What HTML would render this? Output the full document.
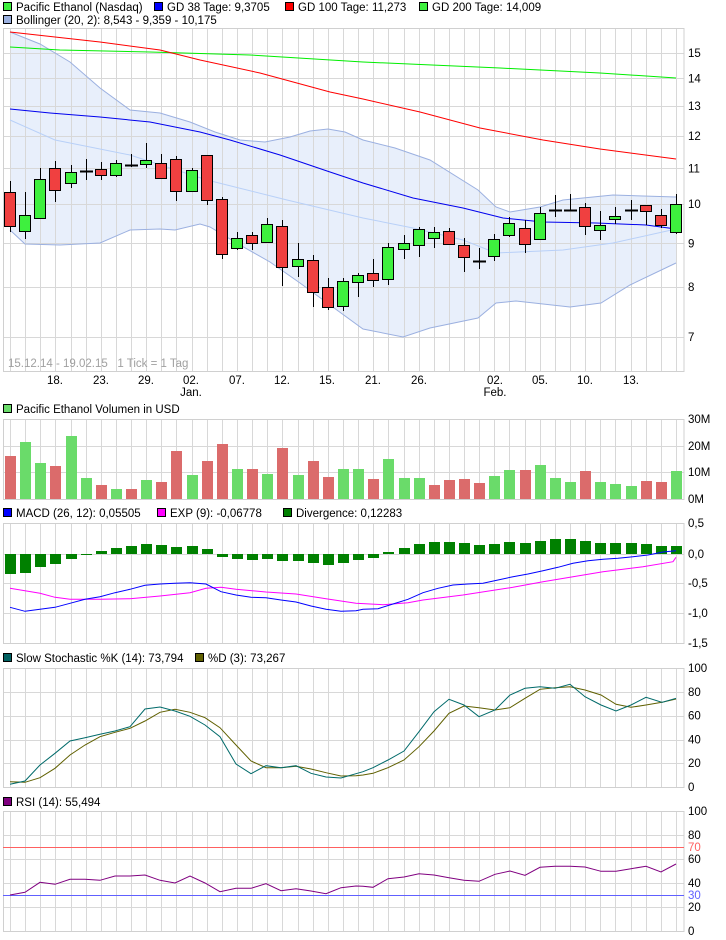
<!DOCTYPE html>
<html><head><meta charset="utf-8"><style>
body{margin:0;background:#fff;width:726px;height:940px;overflow:hidden}
svg{display:block}
text{font-family:"Liberation Sans",sans-serif;font-size:11.5px;fill:#000}
</style></head><body>
<svg id="s" width="726" height="940" xmlns="http://www.w3.org/2000/svg"></svg>
<script>
var s=document.getElementById('s'),h='';
var X=[];for(var i=0;i<45;i++)X.push(10+i*15.136);
function L(x1,y1,x2,y2,c,w){h+='<line x1="'+x1+'" y1="'+y1+'" x2="'+x2+'" y2="'+y2+'" stroke="'+c+'" stroke-width="'+(w||1)+'" shape-rendering="crispEdges"/>';}
function R(x,y,w,hh,f,st){h+='<rect x="'+x+'" y="'+y+'" width="'+w+'" height="'+hh+'" fill="'+f+'"'+(st?' stroke="'+st+'"':'')+' shape-rendering="crispEdges"/>';}
function T(x,y,t,c,a){h+='<text x="'+x+'" y="'+y+'"'+(c?' style="fill:'+c+'"':'')+(a?' text-anchor="'+a+'"':'')+'>'+t+'</text>';}
function P(pts,c,w,fill){var d=pts.map(function(p){return p[0]+','+p[1]}).join(' ');h+='<polyline points="'+d+'" fill="'+(fill||'none')+'" stroke="'+c+'" stroke-width="'+(w||1)+'"/>';}
function panel(top,bot,hl){for(var i=0;i<X.length;i++)L(Math.round(X[i])+.5,top,Math.round(X[i])+.5,bot,'#d8d8d8');hl.forEach(function(y){L(3,y+.5,684,y+.5,'#d8d8d8')});h+='<rect x="3.5" y="'+(top+.5)+'" width="680.5" height="'+(bot-top)+'" fill="none" stroke="#d0d0d0"/>';}
function leg(x,y,c,t){R(x+.5,y-8.5,8,8,c,'#000');T(x+13,y,t);}
leg(3,11,'#3ef03e','Pacific Ethanol (Nasdaq)');leg(154,11,'#0000ff','GD 38 Tage: 9,3705');leg(285,11,'#ff0000','GD 100 Tage: 11,273');leg(419,11,'#3ef03e','GD 200 Tage: 14,009');
leg(3,24,'#9bb0e0','Bollinger (20, 2): 8,543 - 9,359 - 10,175');
function py(p){return 204-373*Math.log(p/10);}
var up=[[10,32],[40,44],[70,62],[100,88],[130,110],[160,113],[190,122],[215,132],[240,140],[265,142],[290,137],[310,131],[328,129],[345,132],[363,140],[395,148],[430,160],[478,190],[496,207],[510,212],[540,207],[563,200],[613,195],[676,197]];
var lo=[[10,230],[25,244],[60,245],[100,243],[130,230],[160,229],[175,230],[200,224],[210,227],[240,245],[270,262],[300,283],[330,305],[363,329],[403,337],[430,328],[478,318],[496,303],[516,301],[570,307],[601,303],[630,285],[676,263]];
h+='<polygon points="'+up.concat(lo.slice().reverse()).map(function(p){return p.join(',')}).join(' ')+'" fill="#e8effb"/>';
panel(28,371,[py(15),py(14),py(13),py(12),py(11),py(10),py(9),py(8),py(7)].map(Math.round));
P(up,'#9bb0e0');P(lo,'#9bb0e0');
P([[10,120],[55,140],[130,155],[207,180],[287,200],[363,218],[413,228],[463,240],[496,253],[563,250],[613,243],[676,229]],'#b8d0f8');
P([[10,47],[60,50],[150,52],[250,55],[363,62],[500,68],[600,73],[676,78]],'#00ee00');
P([[10,32],[100,42],[160,50],[200,60],[260,73],[330,92],[363,99],[420,112],[480,128],[543,140],[600,149],[676,159]],'#ff0000');
P([[10,109],[50,113],[100,117],[150,122],[200,132],[230,140],[280,155],[330,172],[363,183],[413,198],[463,208],[503,218],[543,222],[596,223],[646,225],[676,229]],'#0000ee');
var C=[['r',157,259,122,275],['g',226,274,155,297],['g',118,235,84,235],['r',85,151,63,185],['g',97,130,75,143],['d',92,92,57,119],['r',88,106,66,119],['g',70,106,60,110],['d',74,74,42,80],['g',61,73,10,85],['r',70,115,42,115],['r',58,154,48,182],['g',91,152,85,155],['r',46,181,46,194],['r',178,343,172,358],['g',295,325,276,330],['r',286,310,276,331],['g',253,307,234,310],['r',259,381,240,437],['g',357,379,310,410],['r',360,457,345,502],['r',441,502,414,510],['g',424,499,414,512],['g',405,427,399,472],
['r',400,421,357,440],['g',322,418,310,434],['g',310,328,286,356],['g',268,316,262,352],['g',277,295,262,323],['r',273,313,265,316],['r',316,352,294,397],['d',362,362,325,388],['g',298,349,283,364],['g',250,286,232,290],['r',265,313,240,338],['g',220,298,200,298],['d',211,211,165,232],['d',209,209,162,214],['r',202,259,190,286],['g',256,271,213,301],['g',229,238,202,253],['d',209,209,180,239],['r',196,214,196,256],['r',226,256,208,265],['g',193,277,163,283]];
C.forEach(function(c,i){var x=Math.round(X[i]);var f=function(z){return Math.round(140+z/3)};
L(x+.5,f(c[3]),x+.5,f(c[4]),'#000');
if(c[0]=='d'){L(x-6,f(c[1])+.5,x+7,f(c[1])+.5,'#000',2);}
else R(x-5.5,f(c[1])+.5,11,Math.max(1,f(c[2])-f(c[1])),c[0]=='g'?'#3ef03e':'#f04040','#000');});
[15,14,13,12,11,10,9,8,7].forEach(function(p){T(688,py(p)+4,p)});
T(8,367,'15.12.14 - 19.02.15 &#160; 1 Tick = 1 Tag','#a0a0a0');
[['18.',55],['23.',101],['29.',146],['02.',191],['07.',237],['12.',282],['15.',327],['21.',373],['26.',419],['02.',495],['05.',540],['10.',585],['13.',631]].forEach(function(d){T(d[1],384,d[0],null,'middle')});
T(191,396,'Jan.',null,'middle');T(495,396,'Feb.',null,'middle');
leg(3,413,'#6adb6a','Pacific Ethanol Volumen in USD');
panel(419,499,[446,472]);
var V=[['r',168],['g',126],['g',189],['r',198],['g',108],['g',234],['r',255],['g',267],['r',267],['g',240],['r',246],['r',153],['g',225],['r',183],['r',132],['g',207],['r',207],['g',222],['r',144],['g',225],['r',183],['r',231],['g',207],['g',207],['r',237],['g',177],['g',234],['g',234],['r',255],['r',240],['r',237],['r',249],['g',228],['g',210],['r',210],['g',195],['g',234],['g',246],['r',213],['g',246],['g',252],['g',258],['r',243],['r',246],['g',213]];
V.forEach(function(v,i){var t=Math.round(400+v[1]/3);R(Math.round(X[i])-5,t,11,499-t,v[0]=='g'?'#6adb6a':'#db6b6b');});
[['30M',419],['20M',446],['10M',472],['0M',499]].forEach(function(a){T(688,a[1]+4,a[0])});
leg(3,517,'#0000ff','MACD (26, 12): 0,05505');leg(157,517,'#ff00ff','EXP (9): -0,06778');leg(283,517,'#008000','Divergence: 0,12283');
panel(523,643,[554,583,613]);
var D=[522,519,500,492,477,465,453,444,438,432,435,441,438,447,471,477,480,477,483,483,489,495,489,480,474,456,444,432,426,426,429,435,432,426,429,423,417,417,423,429,429,429,432,438,438];
D.forEach(function(z,i){var y=Math.round(400+z/3);var a=Math.min(y,554),b=Math.max(y,554);R(Math.round(X[i])-5,a,11,Math.max(1,b-a),'#008000');});
function zz(a,o){return a.map(function(p){return [p[0],+(o+p[1]/3).toFixed(1)]})}
P(zz([[10,565],[40,580],[55,592],[70,598],[100,598],[130,596],[160,588],[190,578],[206,565],[221,562],[236,568],[266,576],[296,582],[326,596],[356,610],[383,614],[408,608],[423,600],[463,585],[513,562],[543,545],[573,530],[603,515],[643,500],[673,485],[676,472]],400),'#ff00ff');
P(zz([[10,622],[25,634],[40,628],[55,622],[70,610],[85,598],[100,590],[115,578],[130,568],[145,556],[160,552],[175,550],[190,548],[206,552],[221,575],[236,585],[251,592],[266,593],[281,600],[296,606],[311,618],[326,628],[341,634],[356,632],[363,628],[378,626],[393,612],[408,598],[423,578],[438,565],[453,555],[468,552],[483,550],[498,540],[513,530],[528,522],[543,512],[558,502],[573,490],[588,482],[603,478],[618,475],[633,470],[648,465],[663,456],[676,452]],400),'#0000ff');
[['0,5',523],['0,0',554],['-0,5',583],['-1,0',613],['-1,5',643]].forEach(function(a){T(688,a[1]+4,a[0])});
leg(3,662,'#006060','Slow Stochastic %K (14): 73,794');leg(195,662,'#606000','%D (3): 73,267');
panel(668,787,[692,716,740,763]);
P(zz([[10,410],[25,412],[40,398],[55,370],[70,330],[85,300],[100,275],[115,262],[130,250],[145,228],[160,202],[175,193],[190,202],[205,218],[220,248],[236,300],[251,348],[266,368],[281,368],[296,364],[311,372],[326,383],[341,393],[356,392],[363,390],[373,385],[388,368],[404,345],[419,305],[434,258],[449,205],[464,183],[479,188],[495,195],[510,188],[525,160],[540,133],[555,128],[570,125],[585,135],[601,150],[616,178],[631,187],[646,180],[662,172],[676,162]],645),'#606000');
P(zz([[10,418],[25,408],[40,360],[55,325],[70,288],[85,278],[100,268],[115,258],[130,245],[145,192],[160,186],[175,198],[190,214],[205,240],[220,275],[236,357],[251,386],[266,362],[281,368],[296,362],[311,385],[326,396],[341,399],[356,386],[363,380],[373,368],[388,345],[404,318],[419,260],[434,200],[449,163],[464,180],[479,215],[495,195],[510,150],[525,130],[540,125],[555,130],[570,118],[585,155],[601,180],[616,198],[631,180],[646,157],[662,172],[676,160]],645),'#006a6a');
[100,80,60,40,20,0].forEach(function(v,i){T(688,668+i*23.8+4,v)});
leg(3,806,'#800080','RSI (14): 55,494');
panel(811,931,[835,859,883,907]);
L(3,847.5,684,847.5,'#ff6060');L(3,895.5,684,895.5,'#6060ff');
P(zz([[10,750],[25,742],[40,712],[55,718],[70,703],[85,703],[100,706],[115,693],[130,693],[145,690],[160,706],[175,714],[190,693],[205,714],[220,740],[236,730],[251,730],[266,716],[281,737],[296,731],[311,738],[326,746],[341,728],[356,723],[363,724],[373,727],[388,701],[404,696],[419,686],[434,690],[449,698],[464,706],[479,709],[495,688],[510,678],[525,691],[540,667],[555,664],[570,664],[585,666],[601,679],[616,679],[631,671],[646,664],[661,681],[676,657]],645),'#800080');
[[100,811],[80,835],[60,859],[40,883],[20,907],[0,931]].forEach(function(a){T(688,a[1]+4,a[0])});
T(688,851,'70','#ff6060');T(688,899,'30','#6060ff');
s.innerHTML=h;
</script>
</body></html>
